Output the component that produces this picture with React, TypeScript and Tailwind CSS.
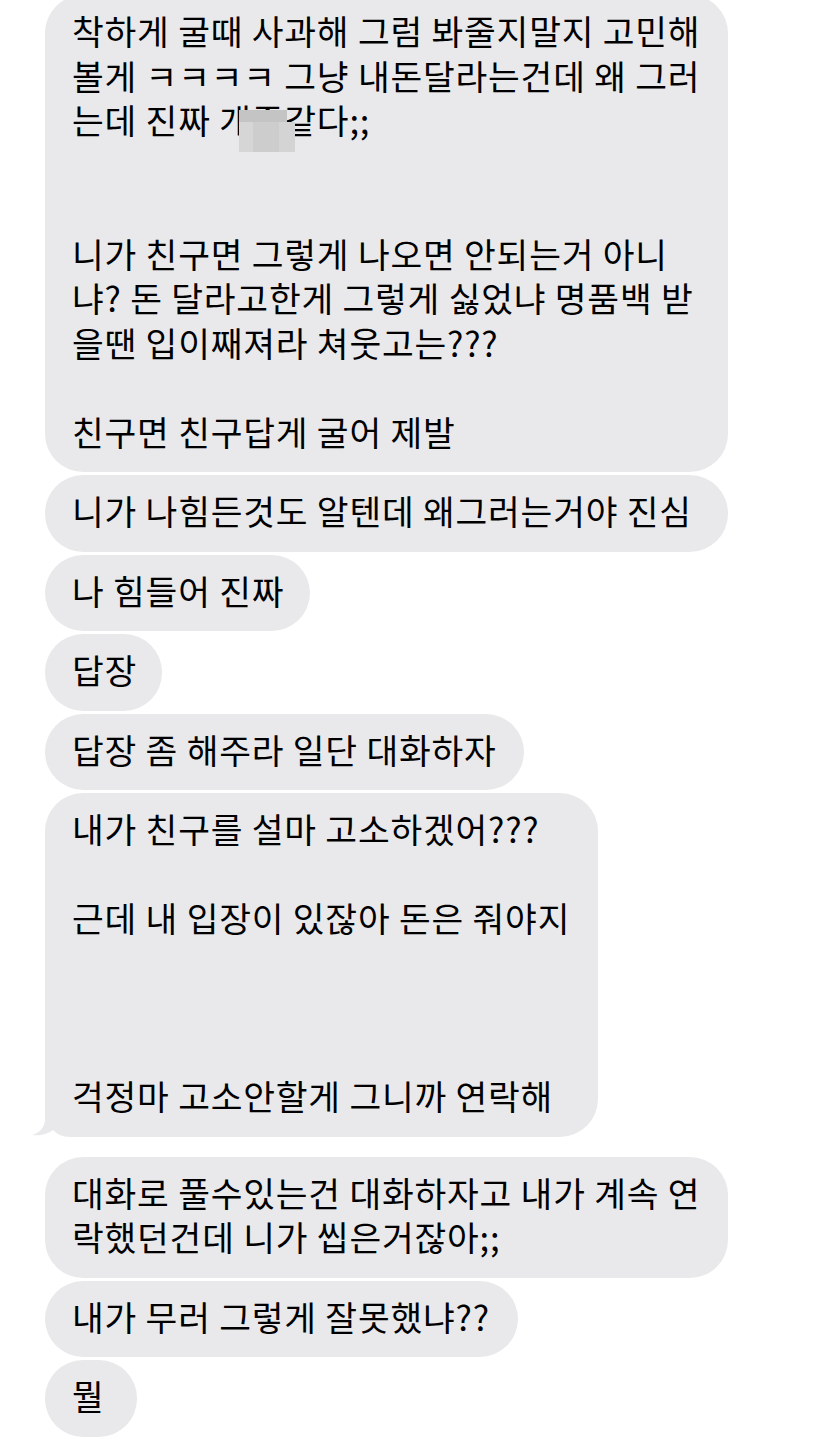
const bubbles = [
  {
    w: "w-[683px]",
    text: "착하게 굴때 사과해 그럼 봐줄지말지 고민해\n볼게 ㅋㅋㅋㅋ 그냥 내돈달라는건데 왜 그러\n는데 진짜 {blur}같다;;\n\n\n니가 친구면 그렇게 나오면 안되는거 아니\n냐? 돈 달라고한게 그렇게 싫었냐 명품백 받\n을땐 입이째져라 쳐웃고는???\n\n친구면 친구답게 굴어 제발",
  },
  { w: "w-[683px]", text: "니가 나힘든것도 알텐데 왜그러는거야 진심" },
  { w: "w-[265px]", text: "나 힘들어 진짜" },
  { w: "w-[117px]", text: "답장" },
  { w: "w-[479px]", text: "답장 좀 해주라 일단 대화하자" },
  {
    w: "w-[553px]",
    text: "내가 친구를 설마 고소하겠어???\n\n근데 내 입장이 있잖아 돈은 줘야지\n\n\n\n걱정마 고소안할게 그니까 연락해",
    tail: true,
  },
  { w: "w-[683px]", text: "대화로 풀수있는건 대화하자고 내가 계속 연\n락했던건데 니가 씹은거잖아;;", gap: true },
  { w: "w-[473px]", text: "내가 무러 그렇게 잘못했냐??" },
  { w: "w-[92px]", text: "뭘" },
  // next message, only its top edge is in view
  { w: "w-[390px]", text: "" },
];

function Censored() {
  return (
    <span className="relative">
      개좆
      <span className="absolute left-[20px] top-[16px] w-[61px] h-[42px] flex flex-col">
        <span className="h-[12px] w-[48px] bg-[#c4c4c4]" />
        <span className="flex-1 w-full flex">
          <span className="w-[14px] bg-[#d6d6d6]" />
          <span className="w-[26px] bg-[#cdcdcd]" />
          <span className="w-[16px] bg-[#d4d4d4]" />
        </span>
      </span>
    </span>
  );
}

function Line({ line }: { line: string }) {
  if (line === "") return <div className="h-[44.5px]" />;
  if (line.includes("{blur}")) {
    const [a, b] = line.split("{blur}");
    return (
      <div className="whitespace-pre">
        {a}
        <Censored />
        {b}
      </div>
    );
  }
  return <div className="whitespace-pre">{line}</div>;
}

function Tail() {
  return (
    <svg
      className="absolute left-[-15px] bottom-0"
      width="60"
      height="48"
      viewBox="0 0 60 48"
    >
      <path
        d="M15 0 L15 30 C15 38 10 44 2 46 C10 47 18 45 23 41 C27 45 32 48 40 48 L60 48 L60 0 Z"
        fill="#e9e9eb"
      />
    </svg>
  );
}

export default function App() {
  return (
    <div
      className="bg-white min-h-screen pl-[45px] text-black text-[34.5px] leading-[44.5px] tracking-[0.8px]"
      style={{ fontFamily: '"Noto Sans CJK KR", "Noto Sans", sans-serif' }}
    >
      <div className="-mt-[5px] flex flex-col gap-[3px]">
        {bubbles.map((b, i) => (
          <div
            key={i}
            className={`relative ${b.w} ${b.gap ? "mt-[17px]" : ""} bg-[#e9e9eb] rounded-[38px] px-[27px] pt-[13px] pb-[19px]`}
          >
            {b.tail && <Tail />}
            <div className="relative">
              {b.text === "" ? (
                <div className="h-[44.5px]" />
              ) : (
                b.text.split("\n").map((line, j) => <Line key={j} line={line} />)
              )}
            </div>
          </div>
        ))}
      </div>
    </div>
  );
}
